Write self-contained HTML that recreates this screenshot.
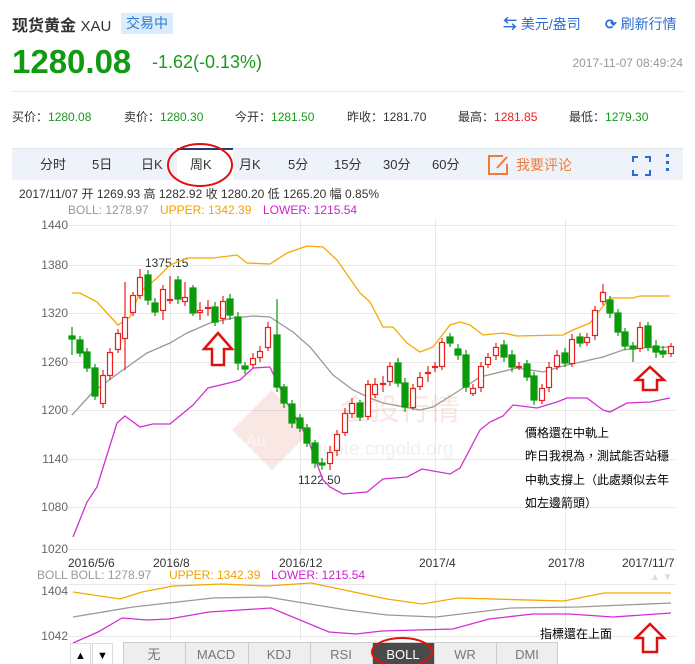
<!DOCTYPE html>
<html><head><meta charset="utf-8"><style>
*{margin:0;padding:0;box-sizing:border-box}
body{width:695px;height:664px;background:#fff;font-family:"Liberation Sans","Noto Sans CJK SC",sans-serif;position:relative;overflow:hidden;color:#333}
.a{position:absolute;white-space:nowrap}
.g{color:#1a9a1a}.r{color:#e8211d}
.tab{position:absolute;top:148px;height:32px;line-height:34px;font-size:13px;color:#333}
</style></head><body>
<div class="a" style="left:12px;top:12px;font-size:16px;font-weight:bold;color:#333">现货黄金 <span style="font-weight:normal;font-size:15px">XAU</span></div>
<div class="a" style="left:121px;top:13px;width:52px;height:21px;background:#dcecfb;color:#2a7bd3;font-size:14px;line-height:21px;text-align:center">交易中</div>
<div class="a" style="left:503px;top:14px;font-size:14px;color:#2a6fd0"><b>⇆</b> 美元/盎司</div>
<div class="a" style="left:605px;top:14px;font-size:14px;color:#2a6fd0"><b>⟳</b> 刷新行情</div>
<div class="a" style="left:12px;top:43px;font-size:33px;font-weight:bold;color:#119911">1280.08</div>
<div class="a g" style="left:152px;top:52px;font-size:18px">-1.62(-0.13%)</div>
<div class="a" style="right:12px;top:56px;font-size:12px;color:#999">2017-11-07 08:49:24</div>
<div class="a" style="left:12px;top:91px;width:671px;height:1px;background:#e8e8e8"></div>
<div class="a" style="left:12px;top:108px;font-size:12px">买价：<span class="g">1280.08</span></div>
<div class="a" style="left:124px;top:108px;font-size:12px">卖价：<span class="g">1280.30</span></div>
<div class="a" style="left:235px;top:108px;font-size:12px">今开：<span class="g">1281.50</span></div>
<div class="a" style="left:347px;top:108px;font-size:12px">昨收：1281.70</div>
<div class="a" style="left:458px;top:108px;font-size:12px">最高：<span class="r">1281.85</span></div>
<div class="a" style="left:569px;top:108px;font-size:12px">最低：<span class="g">1279.30</span></div>
<div class="a" style="left:12px;top:148px;width:671px;height:32px;background:#eef3fa;border-top:1px solid #dde5ef"></div>
<div class="a" style="left:177px;top:148px;width:56px;height:32px;background:#fff;border-top:2px solid #1f3d7a"></div>
<div class="tab" style="left:40px">分时</div><div class="tab" style="left:92px">5日</div><div class="tab" style="left:141px">日K</div>
<div class="tab" style="left:190px">周K</div><div class="tab" style="left:239px">月K</div><div class="tab" style="left:288px">5分</div>
<div class="tab" style="left:334px">15分</div><div class="tab" style="left:383px">30分</div><div class="tab" style="left:432px">60分</div>
<div class="tab" style="left:516px;color:#f07a3a;font-size:14px">我要评论</div>
<svg class="a" style="left:0;top:0" width="695" height="664">
<g fill="none" stroke="#f07a3a" stroke-width="2"><path d="M503 156h-14v18h18v-10"/><path d="M497 168l10-11"/></g>
<g fill="none" stroke="#2a6fd0" stroke-width="2"><path d="M633 162v-5h5M645 157h5v5M650 170v5h-5M638 175h-5v-5"/></g>
<g fill="#2a6fd0"><rect x="666" y="154" width="3" height="3"/><rect x="666" y="161" width="3" height="3"/><rect x="666" y="168" width="3" height="3"/></g>
<ellipse cx="200" cy="165" rx="32" ry="21" fill="none" stroke="#e01010" stroke-width="2"/>
<g stroke="#e8e8e8" stroke-width="1">
<path d="M68 225.5H675M68 265.5H675M68 313.5H675M68 362.5H675M68 410.5H675M68 459.5H675M68 507.5H675M68 549.5H675"/>
<path d="M170.5 220V555M300.5 220V555M435.5 220V555M565.5 220V555"/>
<path d="M68 584.5H675M68 636.5H675M170.5 582V640M300.5 582V640M435.5 582V640M565.5 582V640"/>
</g>
<g font-size="12" fill="#666" font-family="Liberation Sans" text-anchor="end">
<text x="68" y="229">1440</text><text x="68" y="269">1380</text><text x="68" y="317">1320</text><text x="68" y="366">1260</text><text x="68" y="414">1200</text><text x="68" y="463">1140</text><text x="68" y="511">1080</text><text x="68" y="553">1020</text>
<text x="68" y="595">1404</text><text x="68" y="640">1042</text></g>
<g font-size="12" fill="#333" font-family="Liberation Sans">
<text x="68" y="567">2016/5/6</text><text x="153" y="567">2016/8</text><text x="279" y="567">2016/12</text><text x="419" y="567">2017/4</text><text x="548" y="567">2017/8</text><text x="622" y="567">2017/11/7</text>
<text x="145" y="267">1375.15</text><text x="298" y="484">1122.50</text></g>
<g font-size="12" font-family="Liberation Sans"><text x="19" y="198" fill="#333">2017/11/07 开 1269.93 高 1282.92 收 1280.20 低 1265.20 幅 0.85%</text>
<text x="68" y="214" fill="#999">BOLL: 1278.97</text><text x="160" y="214" fill="#f5a000">UPPER: 1342.39</text><text x="263" y="214" fill="#d020d0">LOWER: 1215.54</text>
<text x="37" y="579" fill="#999">BOLL  BOLL: 1278.97</text><text x="169" y="579" fill="#f5a000">UPPER: 1342.39</text><text x="271" y="579" fill="#d020d0">LOWER: 1215.54</text></g>
<text x="650" y="580" fill="#ddd" font-size="10">▲ ▼</text>
<g opacity="0.12" fill="#d04020"><path d="M232 430l40-40 40 40-40 40z"/><text x="340" y="420" font-size="30">金投行情</text><text x="312" y="455" font-size="19" font-family="Liberation Sans" fill="#888">quote.cngold.org</text></g>
<text x="246" y="446" font-size="16" fill="#fff" opacity="0.6" font-family="Liberation Sans">Au</text>
<g fill="none" stroke-width="1.3">
<polyline stroke="#f5a800" points="72,293 80,293 97,302 118,325 130,317 140,292 157,278 170,265 187,258 213,258 237,255 247,263 270,264 287,253 307,246 323,247 337,260 360,293 370,302 383,327 393,327 407,343 420,352 433,347 450,325 460,322 470,325 483,335 503,333 517,336 563,335 573,330 590,323 600,310 610,298 633,298 640,296 670,296"/>
<polyline stroke="#999" points="72,415 93,392 120,372 147,353 170,343 187,333 210,323 233,318 253,316 270,317 293,332 310,347 333,375 353,390 370,398 383,403 420,410 433,407 457,392 480,377 517,368 543,372 563,366 603,357 623,350 637,348 670,347"/>
<polyline stroke="#d030d0" points="73,537 87,502 97,487 117,423 125,416 140,427 153,424 170,424 193,405 208,388 233,382 240,380 253,368 270,367 287,403 307,437 323,480 330,487 343,494 367,492 383,479 407,477 422,469 450,474 460,468 480,430 490,422 503,416 513,405 537,408 557,402 567,398 587,398 603,410 610,412 627,403 650,402 670,398"/>
<polyline stroke="#f5a800" points="73,592 120,599 142,592 173,586 222,584 267,586 311,583 387,599 422,604 458,598 564,601 604,593 671,593"/>
<polyline stroke="#999" points="73,617 133,607 213,598 267,597 347,610 387,615 436,617 511,608 578,607 671,603"/>
<polyline stroke="#d030d0" points="73,643 98,632 122,618 147,620 169,619 209,612 240,610 271,608 329,632 356,634 382,631 453,629 489,619 533,614 569,614 613,617 671,613"/>
</g>
<g id="c" stroke-width="1.2">
<g stroke="#0a9a0a" fill="#0a9a0a">
<path d="M72 327V355M80 336V357M87 348V372M95 364V400M148 270V305M155 298V316M178 276V304M193 285V316M215 302V326M230 294V320M238 312V370M245 362V374M277 299V392M284 384V408M292 400V428M300 414V432M307 424V447M315 440V468M322 458V470M360 400V421M398 358V387M405 378V412M450 333V347M458 344V360M466 350V392M504 340V362M512 350V372M527 360V381M534 372V405M565 348V367M580 333V347M610 296V318M618 309V336M625 328V350M633 342V362M648 322V351M656 340V358M663 346V358"/>
<rect x="69" y="336" width="6" height="3"/><rect x="77" y="340" width="6" height="13"/><rect x="84" y="352" width="6" height="16"/><rect x="92" y="368" width="6" height="28"/><rect x="145" y="275" width="6" height="25"/><rect x="152" y="303" width="6" height="9"/><rect x="175" y="280" width="6" height="19"/><rect x="190" y="288" width="6" height="25"/><rect x="212" y="307" width="6" height="15"/><rect x="227" y="299" width="6" height="16"/><rect x="235" y="317" width="6" height="46"/><rect x="242" y="366" width="6" height="3"/><rect x="274" y="335" width="6" height="52"/><rect x="281" y="387" width="6" height="16"/><rect x="289" y="404" width="6" height="19"/><rect x="297" y="418" width="6" height="10"/><rect x="304" y="428" width="6" height="15"/><rect x="312" y="443" width="6" height="20"/><rect x="319" y="463" width="6" height="2"/><rect x="357" y="403" width="6" height="14"/><rect x="395" y="363" width="6" height="20"/><rect x="402" y="383" width="6" height="24"/><rect x="447" y="337" width="6" height="6"/><rect x="455" y="349" width="6" height="6"/><rect x="463" y="355" width="6" height="32"/><rect x="501" y="345" width="6" height="12"/><rect x="509" y="355" width="6" height="12"/><rect x="524" y="364" width="6" height="13"/><rect x="531" y="376" width="6" height="24"/><rect x="562" y="353" width="6" height="10"/><rect x="577" y="337" width="6" height="6"/><rect x="607" y="300" width="6" height="13"/><rect x="615" y="313" width="6" height="19"/><rect x="622" y="332" width="6" height="14"/><rect x="630" y="346" width="6" height="3"/><rect x="645" y="326" width="6" height="21"/><rect x="653" y="346" width="6" height="6"/><rect x="660" y="351" width="6" height="3"/>
</g>
<g stroke="#e8211d" fill="#fff">
<path d="M103 370V408M110 348V380M118 329V353M125 282V370M133 292V316M140 269V299M163 285V320M170 276V304M185 282V306M200 302V320M208 300V316M223 296V324M253 353V368M260 346V362M268 322V351M330 446V470M337 430V456M345 408V436M352 398V418M368 380V420M375 378V398M383 376V392M390 362V386M413 384V410M420 372V390M428 366V382M435 362V372M442 338V370M473 384V396M481 362V392M488 353V368M496 343V360M519 362V370M542 384V404M549 362V392M557 350V370M572 334V367M587 333V346M595 306V340M603 284V305M640 322V352M671 343V357"/>
<rect x="100.5" y="375.5" width="5" height="28"/><rect x="107.5" y="352.5" width="5" height="23"/><rect x="115.5" y="333.5" width="5" height="16"/><rect x="122.5" y="317.5" width="5" height="21"/><rect x="130.5" y="295.5" width="5" height="17"/><rect x="137.5" y="277.5" width="5" height="18"/><rect x="160.5" y="289.5" width="5" height="21"/><rect x="167.5" y="299.5" width="5" height="1"/><rect x="182.5" y="297.5" width="5" height="4"/><rect x="197.5" y="310.5" width="5" height="2"/><rect x="205.5" y="307.5" width="5" height="1"/><rect x="220.5" y="301.5" width="5" height="17"/><rect x="250.5" y="358.5" width="5" height="6"/><rect x="257.5" y="351.5" width="5" height="6"/><rect x="265.5" y="327.5" width="5" height="20"/><rect x="327.5" y="452.5" width="5" height="11"/><rect x="334.5" y="434.5" width="5" height="16"/><rect x="342.5" y="413.5" width="5" height="19"/><rect x="349.5" y="403.5" width="5" height="10"/><rect x="365.5" y="384.5" width="5" height="32"/><rect x="372.5" y="384.5" width="5" height="10"/><rect x="380.5" y="383.5" width="5" height="1"/><rect x="387.5" y="366.5" width="5" height="15"/><rect x="410.5" y="388.5" width="5" height="19"/><rect x="417.5" y="377.5" width="5" height="9"/><rect x="425.5" y="372.5" width="5" height="1"/><rect x="432.5" y="366.5" width="5" height="1"/><rect x="439.5" y="342.5" width="5" height="24"/><rect x="470.5" y="388.5" width="5" height="5"/><rect x="478.5" y="366.5" width="5" height="21"/><rect x="485.5" y="357.5" width="5" height="7"/><rect x="493.5" y="347.5" width="5" height="8"/><rect x="516.5" y="366.5" width="5" height="1"/><rect x="539.5" y="388.5" width="5" height="12"/><rect x="546.5" y="367.5" width="5" height="20"/><rect x="554.5" y="355.5" width="5" height="11"/><rect x="569.5" y="339.5" width="5" height="24"/><rect x="584.5" y="337.5" width="5" height="5"/><rect x="592.5" y="310.5" width="5" height="25"/><rect x="600.5" y="292.5" width="5" height="9"/><rect x="637.5" y="327.5" width="5" height="21"/><rect x="668.5" y="346.5" width="5" height="7"/>
</g></g>
<g fill="#fff" stroke="#e01010" stroke-width="2.5"><path d="M212 365v-16h-8l14-16 14 16h-8v16z"/><path d="M643 390v-10h-7l14-13 14 13h-7v10z"/><path d="M643 652v-14h-7l14-14 14 14h-7v14z"/></g>
<g font-size="12" fill="#000" font-family="Liberation Sans,Noto Sans CJK TC,sans-serif"><text x="525" y="437">價格還在中軌上</text><text x="525" y="460">昨日我視為，測試能否站穩</text><text x="525" y="484">中軌支撐上（此處類似去年</text><text x="525" y="507">如左邊箭頭）</text><text x="540" y="638">指標還在上面</text></g>
<g font-size="13" font-family="Liberation Sans,Noto Sans CJK SC,sans-serif">
<rect x="70.5" y="643.5" width="20" height="21" fill="#fff" stroke="#ddd"/><rect x="92.5" y="643.5" width="20" height="21" fill="#fff" stroke="#ddd"/>
<text x="75" y="659" font-size="11">▲</text><text x="97" y="659" font-size="11">▼</text>
<rect x="123.5" y="642.5" width="434" height="24" fill="#eee" stroke="#ccc"/>
<path d="M185.5 642v24M248.5 642v24M310.5 642v24M372.5 642v24M434.5 642v24M496.5 642v24" stroke="#ccc"/>
<rect x="373" y="643" width="61" height="22" fill="#4a4a4a"/>
<g fill="#777" text-anchor="middle"><text x="154" y="659">无</text><text x="216" y="659">MACD</text><text x="279" y="659">KDJ</text><text x="341" y="659">RSI</text><text x="465" y="659">WR</text><text x="527" y="659">DMI</text></g>
<text x="403" y="659" fill="#fff" text-anchor="middle">BOLL</text></g>
<ellipse cx="402" cy="652" rx="30" ry="14" fill="none" stroke="#e01010" stroke-width="2"/>
</svg>
</body></html>
